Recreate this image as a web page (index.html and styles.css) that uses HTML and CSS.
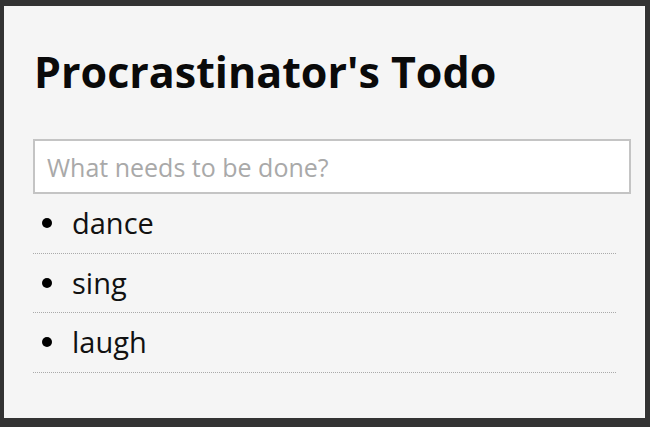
FILE: index.html
```html
<!DOCTYPE html>
<html lang="en">
<head>
<meta charset="utf-8">
<title>Procrastinator's Todo</title>
<link rel="stylesheet" href="styles.css">
</head>
<body>
<div class="panel">
  <h1 class="title">Procrastinator's Todo</h1>
  <input class="new-todo" type="text" placeholder="What needs to be done?">
  <ul class="todo-list">
    <li class="todo-item">dance</li>
    <li class="todo-item">sing</li>
    <li class="todo-item">laugh</li>
  </ul>
</div>
</body>
</html>
```

FILE: styles.css
```css
html, body {
  margin: 0;
  padding: 0;
  background: #333333;
  height: 100%;
}
body {
  padding: 6px 5px 9px 4px;
  box-sizing: border-box;
  font-family: "Open Sans", "Liberation Sans", sans-serif;
  color: #111;
}
.panel {
  background: #f5f5f5;
  height: 100%;
  box-sizing: border-box;
  padding: 1px 28px 0 29px;
  border-right: 1px solid #fafafa;
}
.title {
  font-size: 43px;
  font-weight: 700;
  margin: 36px 0 38px 1px;
  line-height: 58px;
  color: #0a0a0a;
}
.new-todo {
  display: block;
  box-sizing: border-box;
  width: calc(100% + 15px);
  height: 55px;
  margin: 0;
  padding: 0 12px;
  border: 2px solid #c4c4c4;
  background: #fff;
  font-family: "Open Sans", "Liberation Sans", sans-serif;
  font-size: 25px;
  color: #333;
  outline: none;
}
.new-todo::placeholder {
  color: #a9a9a9;
}
.todo-list {
  list-style: none;
  margin: 0;
  padding: 0;
}
.todo-item {
  display: flex;
  align-items: center;
  gap: 20px;
  padding: 8px 0 8px 9px;
  font-size: 29px;
  line-height: 42.5px;
  border-bottom: 1px dotted #aaaaaa;
}
.todo-item::before {
  content: "";
  width: 10px;
  height: 10px;
  border-radius: 50%;
  background: #000;
  flex: none;
}
```
